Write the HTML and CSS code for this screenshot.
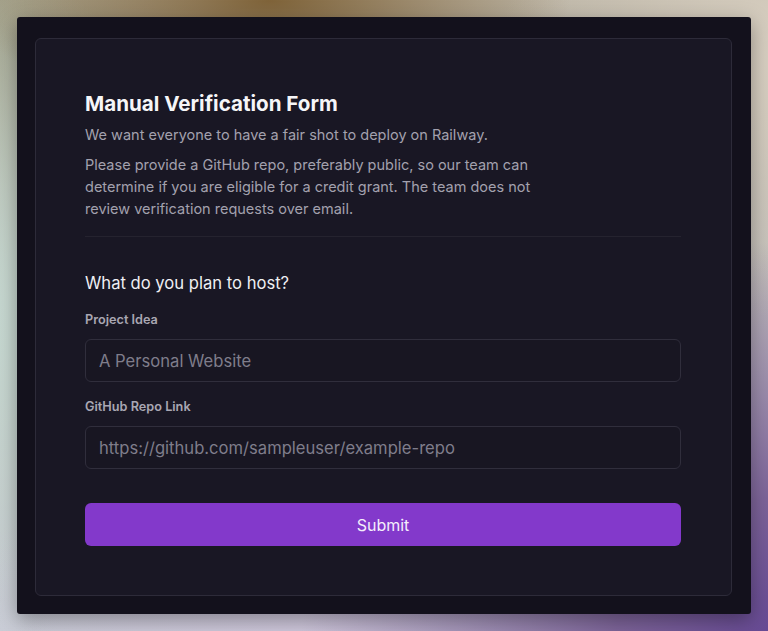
FILE: index.html
```html
<!DOCTYPE html>
<html>
  <head>
    <title>Manual Verification</title>
    <link rel="stylesheet" href="styles.css">
  </head>
  <body>
    <div class="backdrop">
      <div class="panel">
        <div class="card">
          <h1 class="title">Manual Verification Form</h1>
          <p class="intro">We want everyone to have a fair shot to deploy on Railway.</p>
          <p class="intro intro-long">Please provide a GitHub repo, preferably public, so our team can determine if you are eligible for a credit grant. The team does not review verification requests over email.</p>
          <div class="divider"></div>

          <form class="verify-form" onsubmit="return false;">
            <h2 class="form-heading">What do you plan to host?</h2>

            <label class="field-label" for="idea">Project Idea</label>
            <input class="field-input" id="idea" type="text" placeholder="A Personal Website">

            <label class="field-label" for="repo">GitHub Repo Link</label>
            <input class="field-input" id="repo" type="text" placeholder="https://github.com/sampleuser/example-repo">

            <button class="submit-button" type="submit">Submit</button>
          </form>
        </div>
      </div>
    </div>
  </body>
</html>
```

FILE: styles.css
```css
html, body {
  margin: 0;
  height: 100%;
}

body {
  font-family: Inter, "Noto Sans", sans-serif;
  background-color: #b9b4a8;
  background-image:
    radial-gradient(ellipse 300px 120px at 270px 0px, #7f6339 0%, rgba(127, 99, 57, 0) 100%),
    radial-gradient(ellipse 520px 420px at 820px 660px, #5e3f92 0%, #7d6499 40%, rgba(125, 100, 153, 0) 100%),
    radial-gradient(ellipse 380px 260px at 330px 660px, #cfc6dc 0%, rgba(207, 198, 220, 0) 100%),
    radial-gradient(ellipse 260px 360px at -40px 320px, #c7dcd4 0%, rgba(199, 220, 212, 0) 100%),
    radial-gradient(ellipse 240px 260px at -40px 40px, #9d9c84 0%, rgba(157, 156, 132, 0) 100%),
    radial-gradient(ellipse 300px 260px at 800px 60px, #dad1c3 0%, rgba(218, 209, 195, 0) 100%),
    linear-gradient(180deg, #bcb5a6 0%, #c9ccd6 100%);
}

.backdrop {
  box-sizing: border-box;
  height: 100%;
  padding: 17px;
}

.panel {
  box-sizing: border-box;
  height: 100%;
  padding: 21px 19px 18px 18px;
  background-color: #13111c;
  border-radius: 3px;
  box-shadow: 0 6px 20px rgba(0, 0, 0, 0.35);
}

.card {
  box-sizing: border-box;
  height: 100%;
  padding: 51px 50px 0 49px;
  background-color: #191724;
  border: 1px solid #2d2b39;
  border-radius: 6px;
}

.title {
  margin: 0;
  font-size: 20.6px;
  line-height: 28px;
  font-weight: 700;
  color: #f6f6f8;
}

.intro {
  margin: 6px 0 0 0;
  max-width: 460px;
  font-size: 14.5px;
  line-height: 22px;
  color: #a3a1ae;
}

.intro-long {
  margin-top: 8px;
}

.divider {
  height: 1px;
  margin-top: 16px;
  background-color: #25232f;
}

.verify-form {
  display: flex;
  flex-direction: column;
}

.form-heading {
  margin: 34px 0 0 0;
  font-size: 16.6px;
  line-height: 24px;
  font-weight: 400;
  color: #efeff3;
}

.field-label {
  margin-top: 16px;
  font-size: 12.7px;
  line-height: 18px;
  font-weight: 600;
  color: #a9a7b3;
}

.field-label + .field-input {
  margin-top: 10px;
}

.field-input + .field-label {
  margin-top: 16px;
}

.field-input {
  box-sizing: border-box;
  height: 43px;
  padding: 0 13px;
  background-color: #181622;
  border: 1px solid #302e3c;
  border-radius: 6px;
  font-family: Inter, "Noto Sans", sans-serif;
  font-size: 16.6px;
  color: #e6e6ea;
  outline: none;
}

.field-input::placeholder {
  color: #7f7d8b;
}

.submit-button {
  height: 43px;
  margin-top: 34px;
  background-color: #8339cb;
  border: none;
  border-radius: 6px;
  font-family: Inter, "Noto Sans", sans-serif;
  font-size: 16px;
  color: #f4eefb;
  cursor: pointer;
}

.submit-button:hover {
  background-color: #8f47d6;
}
```
